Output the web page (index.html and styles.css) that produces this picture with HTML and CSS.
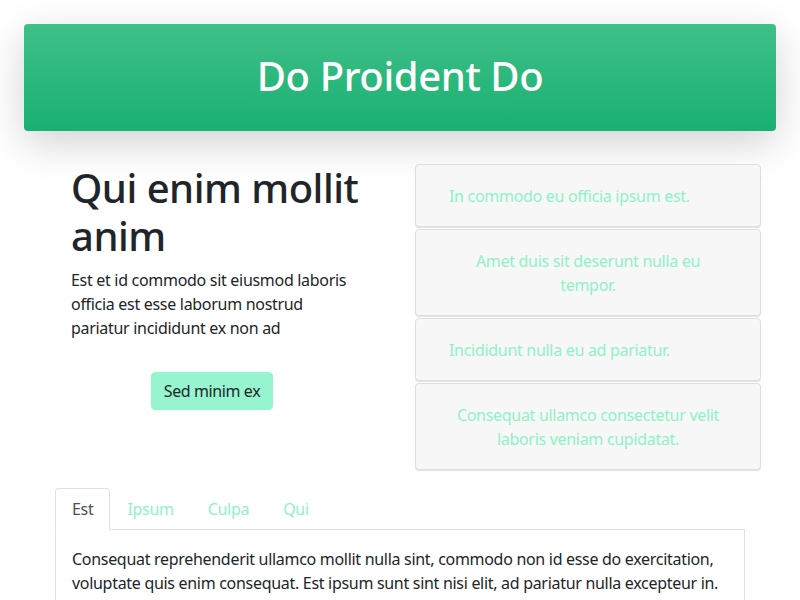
FILE: index.html
```html
<!DOCTYPE html>
<html lang="en">
<head>
<meta charset="utf-8">
<title>Do Proident Do</title>
<link rel="stylesheet" href="styles.css">
</head>
<body>
<header class="hero">
  <h1 class="hero-title">Do Proident Do</h1>
</header>
<main class="container">
  <section class="row">
    <div class="intro">
      <h2 class="intro-title">Qui enim mollit anim</h2>
      <p class="intro-text">Est et id commodo sit eiusmod laboris officia est esse laborum nostrud pariatur incididunt ex non ad</p>
      <div class="btn-wrap"><button class="btn">Sed minim ex</button></div>
    </div>
    <ul class="cards">
      <li class="card">In commodo eu officia ipsum est.</li>
      <li class="card card-center">Amet duis sit deserunt nulla eu tempor.</li>
      <li class="card">Incididunt nulla eu ad pariatur.</li>
      <li class="card card-center">Consequat ullamco consectetur velit laboris veniam cupidatat.</li>
    </ul>
  </section>
  <section class="tabs">
    <nav class="tab-nav">
      <a class="tab active">Est</a>
      <a class="tab">Ipsum</a>
      <a class="tab">Culpa</a>
      <a class="tab">Qui</a>
    </nav>
    <div class="tab-panel">
      Consequat reprehenderit ullamco mollit nulla sint, commodo non id esse do exercitation, voluptate quis enim consequat. Est ipsum sunt sint nisi elit, ad pariatur nulla excepteur in.
    </div>
  </section>
</main>
</body>
</html>
```

FILE: styles.css
```css
* { box-sizing: border-box; }
html, body { margin: 0; padding: 0; }
body {
  font-family: "Noto Sans", "Open Sans", sans-serif;
  font-size: 16px;
  line-height: 24px;
  color: #212529;
  background: #fff;
  overflow: hidden;
}
.hero {
  margin: 24px 24px 0;
  height: 107px;
  padding-bottom: 4px;
  border-radius: 4px;
  background: linear-gradient(#3fc088, #1ab072);
  box-shadow: 0 12px 40px rgba(0,0,0,0.18);
  display: flex;
  align-items: center;
  justify-content: center;
}
.hero-title {
  margin: 0;
  color: #fff;
  font-size: 40px;
  line-height: 48px;
  font-weight: 500;
  letter-spacing: -0.4px;
}
.container {
  padding: 0 55px;
}
.row {
  display: flex;
  margin-top: 33px;
}
.intro {
  flex: 0 0 360px;
  padding: 0 16px;
}
.intro-title {
  margin: 0 0 8px;
  font-size: 40px;
  line-height: 48px;
  font-weight: 500;
  letter-spacing: -0.5px;
  width: 300px;
}
.intro-text {
  margin: 0 0 16px;
  width: 282px;
  letter-spacing: -0.3px;
}
.btn-wrap {
  padding: 16px 0 0 80px;
}
.btn {
  font: inherit;
  letter-spacing: -0.4px;
  white-space: nowrap;
  color: #212529;
  background: #96f5cf;
  border: 1px solid #96f5cf;
  border-radius: 4px;
  padding: 6px 0;
  width: 122px;
  line-height: 24px;
}
.cards {
  list-style: none;
  margin: 0;
  padding: 0;
  flex: 0 0 346px;
  display: flex;
  flex-direction: column;
  gap: 2px;
}
.card {
  background: #f7f7f7;
  border: 1px solid #dedede;
  border-radius: 4px;
  box-shadow: 0 1px 1px rgba(0,0,0,0.12);
  padding: 19px 33px 18px;
  color: #8ef2c6;
  letter-spacing: -0.3px;
}
.card-center { text-align: center; }
.tabs {
  margin-top: 18px;
}
.tab-nav {
  display: flex;
  border-bottom: 1px solid #dee2e6;
}
.tab {
  padding: 8px 16px;
  border: 1px solid transparent;
  border-top-left-radius: 4px;
  border-top-right-radius: 4px;
  margin-bottom: -1px;
  color: #8ef2c6;
  letter-spacing: -0.3px;
}
.tab.active {
  color: #495057;
  background: #fff;
  border-color: #dee2e6 #dee2e6 #fff;
}
.tab-panel {
  border: 1px solid #dee2e6;
  border-top: 0;
  padding: 17px 16px 16px;
  letter-spacing: -0.3px;
}
```
